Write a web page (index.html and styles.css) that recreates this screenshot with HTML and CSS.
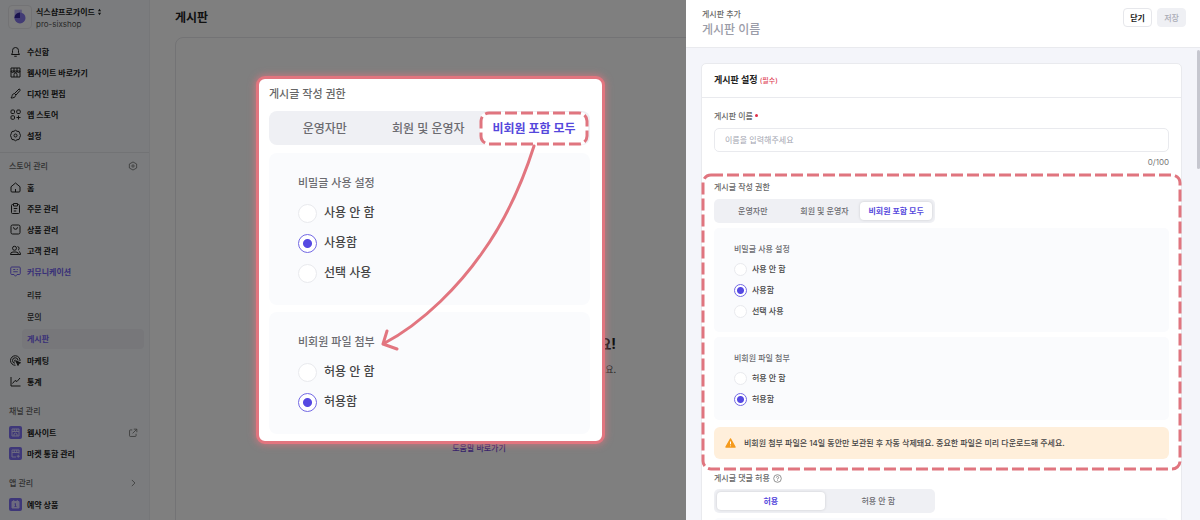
FILE: index.html
```html
<!DOCTYPE html>
<html lang="ko">
<head>
  <meta charset="UTF-8">
  <meta name="viewport" content="width=device-width, initial-scale=1.0">
  <title>게시판 추가</title>
  <link rel="stylesheet" href="styles.css">
</head>
<body>
  <div class="screen">
    <div class="app">
      <aside class="sidebar">
        <div class="profile">
          <div class="profile-logo">
            <svg viewBox="0 0 24 24" aria-hidden="true">
              <rect x="6" y="4" width="8" height="10" fill="#b9b0f5"/>
              <circle cx="12" cy="13" r="6" fill="#8476ea"/>
              <path d="M6 13a6 6 0 0 1 6-6v6z" fill="#33239c"/>
            </svg>
          </div>
          <div>
            <div class="profile-name">식스샵프로가이드
              <svg viewBox="0 0 6 10" aria-hidden="true"><path d="M3 1l2 3H1zM3 9L1 6h4z" fill="#222"/></svg>
            </div>
            <div class="profile-id">pro-sixshop</div>
          </div>
        </div>

        <nav>
          <ul class="menu menu-top">
            <li><a href="#">
              <svg class="icon" viewBox="0 0 26 26"><path d="M5 19h16l-2-3.500V11a6 6 0 0 0-12 0v4.500zM10.500 22.500h5"/></svg>
              수신함</a></li>
            <li><a href="#">
              <svg class="icon" viewBox="0 0 26 26"><path d="M4 4h18v18H4zM4 10h18M10 4v6M16 4v6M10 22v-5a3 3 0 0 1 6 0v5M4 10a3 3 0 0 0 6 0 3 3 0 0 0 6 0 3 3 0 0 0 6 0"/></svg>
              웹사이트 바로가기</a></li>
            <li><a href="#">
              <svg class="icon" viewBox="0 0 26 26"><path d="M11 13L20 4q3 0 2 3l-8 9zM11 13l3 3M10.500 13.500c-4 0-4 3-4.500 5l-2 3.500c4 0 9-1 9.500-5.500"/></svg>
              디자인 편집</a></li>
            <li><a href="#">
              <svg class="icon" viewBox="0 0 26 26"><rect x="4" y="4" width="7" height="7" rx="2"/><rect x="15.500" y="4" width="7" height="7" rx="2"/><rect x="4" y="15.500" width="7" height="7" rx="2"/><path d="M19 15v8M15 19h8"/></svg>
              앱 스토어</a></li>
            <li><a href="#">
              <svg class="icon" viewBox="0 0 26 26"><path d="M13 2.500l3 2 4 .500 1.500 4L23 13l-1.500 4-1.500 4-4 .500-3 2-3-2L6 21l-1.500-4L3 13l1.500-4L6 5l4-.500z"/><circle cx="13" cy="13" r="3"/></svg>
              설정</a></li>
          </ul>

          <div class="menu-title">
            스토어 관리
            <svg class="icon-side" viewBox="0 0 26 26"><path d="M13 2.500l9.500 5.300v10.400L13 23.500l-9.500-5.300V7.800z"/><circle cx="13" cy="13" r="3"/></svg>
          </div>
          <ul class="menu">
            <li><a href="#">
              <svg class="icon" viewBox="0 0 26 26"><path d="M4 11.500L13 4l9 7.500V20q0 2-2 2H6q-2 0-2-2zM13 22v-6"/></svg>
              홈</a></li>
            <li><a href="#">
              <svg class="icon" viewBox="0 0 26 26"><path d="M9 5H7q-2 0-2 2v14q0 2 2 2h12q2 0 2-2V7q0-2-2-2h-2M9 3h8v5H9zM9.500 13h7M9.500 18h5"/></svg>
              주문 관리</a></li>
            <li><a href="#">
              <svg class="icon" viewBox="0 0 26 26"><rect x="4" y="4" width="18" height="18" rx="3"/><path d="M9 8.500a4 4 0 0 0 8 0"/></svg>
              상품 관리</a></li>
            <li><a href="#">
              <svg class="icon" viewBox="0 0 26 26"><circle cx="11" cy="8.500" r="4"/><path d="M3 21q0-5 5-5h6q5 0 5 5zM17 5a4 4 0 0 1 1 7.500M20 15q3 1 3 6h-4"/></svg>
              고객 관리</a></li>
            <li class="active"><a href="#">
              <svg class="icon" viewBox="0 0 26 26"><path d="M5.500 4h15q2 0 2 2v11q0 2-2 2H16l-3 3.500-3-3.500H5.500q-2 0-2-2V6q0-2 2-2zM8.500 9h4M8.500 13.500h9M15.500 9h2"/></svg>
              커뮤니케이션</a>
              <ul class="submenu">
                <li><a href="#">리뷰</a></li>
                <li><a href="#">문의</a></li>
                <li class="current"><a href="#">게시판</a></li>
              </ul>
            </li>
            <li><a href="#">
              <svg class="icon" viewBox="0 0 26 26"><path d="M22 14a9.500 9.500 0 1 0-9 8.500M18 13a5.500 5.500 0 1 0-6 5.500M14 13.500a1.500 1.500 0 1 0-1.500 1.500"/><path d="M14 14l9 3.500-3.500 1.500-1.500 4z" fill="#222"/></svg>
              마케팅</a></li>
            <li><a href="#">
              <svg class="icon" viewBox="0 0 26 26"><path d="M4 4v18h19M7 17l5-6 4 2 6-7"/></svg>
              통계</a></li>
          </ul>

          <div class="menu-title spaced">채널 관리</div>
          <ul class="menu">
            <li><a href="#">
              <svg class="icon-box" viewBox="0 0 26 26"><rect width="26" height="26" rx="4"/><path d="M6 6h14v14H6zM6 11h14M10.500 6v5M15.500 6v5M10 20v-4l3-2 3 2v4"/></svg>
              웹사이트
              <svg class="icon-side" viewBox="0 0 26 26"><path d="M11 5H6q-2 0-2 2v13q0 2 2 2h13q2 0 2-2v-5M15 3h8v8M22.500 3.500L12 14"/></svg></a></li>
            <li><a href="#">
              <svg class="icon-box" viewBox="0 0 26 26"><rect width="26" height="26" rx="4"/><path d="M20 13V6H6v14h8M6 11h14M10.500 6v5M15.500 6v5M18.500 15.500v6M15.500 18.500h6"/></svg>
              마켓 통합 관리</a></li>
          </ul>

          <div class="menu-title spaced">
            앱 관리
            <svg class="icon-side" viewBox="0 0 26 26"><path d="M10 5l8 8-8 8"/></svg>
          </div>
          <ul class="menu">
            <li><a href="#">
              <svg class="icon-box" viewBox="0 0 26 26"><rect width="26" height="26" rx="4"/><path d="M6 7h14v13H6z" fill="#d8d4ff"/><path d="M9.500 4v4M16.500 4v4"/><path d="M11 12l2-1v6M11 17h4" stroke="#7c6ef2"/></svg>
              예약 상품</a></li>
          </ul>
        </nav>
      </aside>

      <main class="content">
        <h1>게시판</h1>
        <section class="board-list">
          <h2>요!</h2>
          <p>요.</p>
          <a href="#">도움말 바로가기</a>
        </section>
      </main>
      <div class="dim"></div>
    </div>

    <section class="drawer">
      <header class="drawer-header">
        <div>
          <div class="drawer-caption">게시판 추가</div>
          <h2>게시판 이름</h2>
        </div>
        <div class="drawer-actions">
          <button type="button" class="btn">닫기</button>
          <button type="button" class="btn btn-disabled" disabled>저장</button>
        </div>
      </header>

      <div class="drawer-body">
        <form class="card">
          <h3>게시판 설정 <span>(필수)</span></h3>

          <div class="field">
            <label class="label" for="boardName">게시판 이름<span class="required"></span></label>
            <input type="text" id="boardName" placeholder="이름을 입력해주세요">
            <div class="counter">0/100</div>
          </div>

          <div class="highlight">
            <div class="label">게시글 작성 권한</div>
            <div class="segment">
              <button type="button">운영자만</button>
              <button type="button">회원 및 운영자</button>
              <button type="button" class="on">비회원 포함 모두</button>
            </div>
            <fieldset class="option-box">
              <legend>비밀글 사용 설정</legend>
              <label><input type="radio" name="secret">사용 안 함</label>
              <label><input type="radio" name="secret" checked>사용함</label>
              <label><input type="radio" name="secret">선택 사용</label>
            </fieldset>
            <fieldset class="option-box">
              <legend>비회원 파일 첨부</legend>
              <label><input type="radio" name="file">허용 안 함</label>
              <label><input type="radio" name="file" checked>허용함</label>
            </fieldset>
            <p class="notice">
              <svg viewBox="0 0 22 20" aria-hidden="true"><path d="M11 2l9 16H2z" fill="#f59a1c" stroke="#f59a1c" stroke-width="3" stroke-linejoin="round"/><path d="M11 7v5.500M11 15v1.500" stroke="#fff" stroke-width="2"/></svg>
              비회원 첨부 파일은 14일 동안만 보관된 후 자동 삭제돼요. 중요한 파일은 미리 다운로드해 주세요.
            </p>
            <svg class="dashes" aria-hidden="true"><rect class="dash-rect"/></svg>
          </div>

          <div class="field-comment">
            <div class="label">게시글 댓글 허용
              <svg viewBox="0 0 20 20" aria-hidden="true"><circle cx="10" cy="10" r="8.500"/><path d="M7.500 8a2.500 2.500 0 1 1 2.500 2.500v1.500M10 13.500v1.500"/></svg>
            </div>
            <div class="segment">
              <button type="button" class="on">허용</button>
              <button type="button">허용 안 함</button>
            </div>
            <div class="option-box"></div>
          </div>
        </form>
        <div class="scroll-thumb"></div>
      </div>
    </section>

    <form class="callout">
      <div class="label">게시글 작성 권한</div>
      <div class="segment">
        <button type="button">운영자만</button>
        <button type="button">회원 및 운영자</button>
        <button type="button" class="on">비회원 포함 모두
          <svg class="dashes" aria-hidden="true"><rect class="dash-rect"/></svg>
        </button>
      </div>
      <fieldset class="option-box">
        <legend>비밀글 사용 설정</legend>
        <label><input type="radio" name="secretZoom">사용 안 함</label>
        <label><input type="radio" name="secretZoom" checked>사용함</label>
        <label><input type="radio" name="secretZoom">선택 사용</label>
      </fieldset>
      <fieldset class="option-box">
        <legend>비회원 파일 첨부</legend>
        <label><input type="radio" name="fileZoom">허용 안 함</label>
        <label><input type="radio" name="fileZoom" checked>허용함</label>
      </fieldset>
      <svg class="arrow" viewBox="0 0 343 362" aria-hidden="true">
        <path d="M275 67C262 108 243 146 223 174C202 204 166 243 124 265M128 252L124 265L138 270"/>
      </svg>
    </form>
  </div>
</body>
</html>
```

FILE: styles.css
```css
* {
  box-sizing: border-box;
}
body {
  margin: 0;
  font-family: Inter, "Noto Sans CJK KR", sans-serif;
  font-size: 8px;
  line-height: 16px;
  color: #222;
}
h1, h2, h3, p, ul, fieldset {
  margin: 0;
  padding: 0;
}
ul {
  list-style: none;
}
a {
  color: inherit;
  text-decoration: none;
}
button, input {
  font: inherit;
}
button {
  padding: 0;
  border: none;
}
svg {
  display: block;
  fill: none;
}

.screen {
  position: relative;
  display: grid;
  grid-template-columns: minmax(0, 1fr) 514px;
  height: 100vh;
  overflow: hidden;
}
.app {
  position: relative;
  display: grid;
  grid-template-columns: 150px minmax(0, 1fr);
  height: 100vh;
  overflow: hidden;
}
.dim {
  position: absolute;
  inset: 0;
  background: rgba(0, 0, 0, 0.5);
}

/* sidebar */
.sidebar {
  background: #f6f9fc;
  border-right: 1px solid #eceef2;
}
.profile {
  display: flex;
  gap: 4px;
  height: 41px;
  padding: 5px 8px;
}
.profile-logo {
  width: 24px;
  height: 24px;
  border: 1px solid #e6e7eb;
  border-radius: 4px;
  background: #fafbfc;
}
.profile-name {
  display: flex;
  align-items: center;
  gap: 2px;
  height: 13px;
  font-weight: 700;
}
.profile-name svg {
  width: 5px;
  height: 8px;
}
.profile-id {
  height: 13px;
  line-height: 13px;
  color: #555;
}
.menu a {
  display: flex;
  align-items: center;
  gap: 5px;
  height: 21px;
  padding: 0 11px 0 9px;
  font-weight: 700;
}
.menu-top {
  padding-bottom: 6px;
  border-bottom: 1px solid #e4e6ea;
  margin-bottom: 5px;
}
.icon, .icon-box {
  width: 13px;
  height: 13px;
  stroke: currentColor;
  stroke-width: 2;
  stroke-linejoin: round;
}
.icon-box {
  stroke: #d8d4ff;
}
.icon-box rect {
  fill: #7c6ef2;
  stroke: none;
}
.icon-side {
  width: 10px;
  height: 10px;
  margin-left: auto;
  stroke: #666;
  stroke-width: 2;
}
.menu-title {
  display: flex;
  align-items: center;
  margin-bottom: 3px;
  padding: 0 11px 0 9px;
  color: #666;
  font-weight: 500;
}
.menu-title.spaced {
  margin-top: 11px;
}
.menu .active > a, .menu .current a {
  color: #7260f0;
}
.submenu {
  display: grid;
  gap: 2px;
  padding: 3px 5px 1px 22px;
}
.submenu a {
  height: 20px;
  padding: 0 5px;
  font-weight: 500;
  color: #333;
}
.submenu .current a {
  border-radius: 4px;
  background: #eeeef4;
  font-weight: 700;
}

/* board list behind the drawer */
.content {
  padding: 8px 0 0 25px;
  background: #fff;
}
.content h1 {
  font-size: 12px;
  line-height: 20px;
}
.board-list {
  height: 100%;
  margin: 9px -97px 0 0;
  padding-top: 296px;
  border: 1px solid #e6e6ea;
  border-radius: 8px;
  text-align: center;
}
.board-list h2, .board-list p {
  max-width: 274px;
  margin: 0 auto;
  text-align: right;
}
.board-list h2 {
  font-size: 14px;
  line-height: 20px;
}
.board-list p {
  padding: 8px 0 62px;
  font-size: 9px;
  color: #444;
}
.board-list a {
  color: #6340d8;
  font-weight: 500;
}

/* drawer */
.drawer {
  position: relative;
  display: flex;
  flex-direction: column;
  height: 100vh;
  background: #f4f5fa;
}
.drawer-header {
  display: flex;
  justify-content: space-between;
  align-items: flex-start;
  height: 48px;
  padding: 6px 14px 0 16px;
  border-bottom: 1px solid #e9eaee;
  background: #fff;
}
.drawer-caption {
  color: #666;
  font-weight: 500;
}
.drawer-header h2 {
  font-size: 12px;
  line-height: 16px;
  font-weight: 500;
  color: #9a9ca8;
}
.drawer-actions {
  display: flex;
  gap: 5px;
  padding-top: 2px;
}
.btn {
  width: 29px;
  height: 19px;
  border: 1px solid #e6e7eb;
  border-radius: 4px;
  background: #fff;
  color: #222;
  font-weight: 700;
}
.btn-disabled {
  border-color: #eff0f4;
  background: #eff0f4;
  color: #a9abb5;
  font-weight: 500;
}
.drawer-body {
  position: relative;
  flex: 1;
  min-height: 0;
  padding: 15px 18px 0 15px;
  overflow: hidden;
}
.scroll-thumb {
  position: absolute;
  top: 2px;
  right: 0;
  width: 3px;
  height: 119px;
  border-radius: 2px;
  background: #c6c7cf;
}
.card {
  border: 1px solid #e9eaee;
  border-radius: 5px;
  background: #fff;
}
.card h3 {
  padding: 0 12px;
  border-bottom: 1px solid #e9eaee;
  font-size: 9px;
  line-height: 32px;
  font-weight: 700;
}
.card h3 span {
  color: #e0465a;
  font-size: 7px;
  font-weight: 500;
}
.field {
  padding: 10px 12px 4px;
}
.label {
  display: flex;
  align-items: center;
  height: 16px;
  margin-bottom: 4px;
  color: #666;
  font-weight: 500;
}
.required {
  width: 3px;
  height: 3px;
  margin: 0 0 2px 2px;
  border-radius: 50%;
  background: #e0304a;
}
.field input {
  display: block;
  width: 100%;
  height: 24px;
  padding: 0 10px;
  border: 1px solid #e9eaee;
  border-radius: 5px;
  background: #fff;
}
.field input::placeholder {
  color: #a3a5b0;
  opacity: 1;
}
.counter {
  margin-top: 2px;
  color: #777;
  text-align: right;
}

.segment {
  display: grid;
  grid-auto-flow: column;
  grid-auto-columns: 1fr;
  width: 221px;
  height: 24px;
  margin-bottom: 5px;
  padding: 3px;
  border-radius: 5px;
  background: #eff0f4;
}
.segment button {
  position: relative;
  border-radius: 4px;
  background: none;
  color: #6b6b70;
  font-weight: 500;
}
.segment .on {
  background: #fff;
  color: #5548dc;
  font-weight: 700;
  box-shadow: 0 0 3px rgba(0, 0, 0, 0.15);
}
.option-box {
  display: grid;
  gap: 7px;
  margin-bottom: 5px;
  padding: 13px 20px 14px;
  border: none;
  border-radius: 5px;
  background: #fafbfd;
}
.option-box legend {
  float: left;
  height: 16px;
  margin-bottom: -2px;
  padding: 0;
  color: #6b6b70;
  font-weight: 500;
}
.option-box label {
  display: flex;
  align-items: center;
  gap: 5px;
  height: 14px;
  color: #444;
  font-weight: 500;
}
.option-box input {
  appearance: none;
  width: 13px;
  height: 13px;
  margin: 0;
  border: 1px solid #e9eaee;
  border-radius: 50%;
  background: #fff;
}
.option-box input:checked {
  border-color: #7369e4;
  background: radial-gradient(circle, #5549e2 3px, #fff 4px);
}
.notice {
  display: flex;
  align-items: center;
  gap: 8px;
  height: 32px;
  margin-top: 7px;
  padding: 0 11px;
  border-radius: 6px;
  background: #ffefdb;
  color: #444;
  font-weight: 500;
}
.notice svg {
  width: 11px;
  height: 10px;
}
.highlight {
  position: relative;
  padding: 5px 12px 11px;
}
.dashes {
  position: absolute;
  top: 0;
  left: 0;
  width: 100%;
  height: 100%;
  overflow: visible;
}
.dash-rect {
  x: 1px;
  y: 1px;
  width: calc(100% - 2px);
  height: calc(100% - 2px);
  rx: 8px;
  stroke: #e0757f;
  stroke-width: 3;
  stroke-dasharray: 12 4;
}
.field-comment {
  padding: 0 12px;
}
.field-comment .label {
  gap: 3px;
  margin-bottom: 3px;
}
.field-comment .label svg {
  width: 9px;
  height: 9px;
  stroke: #888;
  stroke-width: 2;
}

/* enlarged view of the permission settings */
.callout {
  position: absolute;
  top: 76px;
  left: 256px;
  width: 349px;
  padding: 5px 12px 7px 10px;
  border: 3px solid #e2757f;
  border-radius: 9px;
  background: #fff;
  box-shadow: 0 0 7px 1px rgba(226, 117, 127, 0.7);
  font-size: 12px;
  line-height: 20px;
}
.callout .label {
  height: 20px;
  margin-bottom: 7px;
  font-size: 11px;
}
.callout .segment {
  grid-template-columns: 1fr 1fr 108px;
  width: auto;
  height: 34px;
  margin-bottom: 8px;
  padding: 1px 2px 0 4px;
  border-radius: 8px;
}
.callout .segment .on {
  border-radius: 8px;
  box-shadow: none;
}
.callout .option-box {
  gap: 10px;
  margin-bottom: 7px;
  padding: 20px 29px 22px;
  border-radius: 8px;
}
.callout .option-box:last-of-type {
  margin-bottom: 0;
}
.callout .option-box legend {
  height: 20px;
  margin: 0;
  font-size: 11px;
}
.callout .option-box label {
  gap: 7px;
  height: 20px;
}
.callout .option-box input {
  width: 19px;
  height: 19px;
}
.callout .option-box input:checked {
  background: radial-gradient(circle, #5549e2 4px, #fff 5px);
}
.arrow {
  position: absolute;
  top: 0;
  left: 0;
  width: 343px;
  height: 362px;
  stroke: #e2757f;
  stroke-width: 3;
  stroke-linecap: round;
  stroke-linejoin: round;
}
```
